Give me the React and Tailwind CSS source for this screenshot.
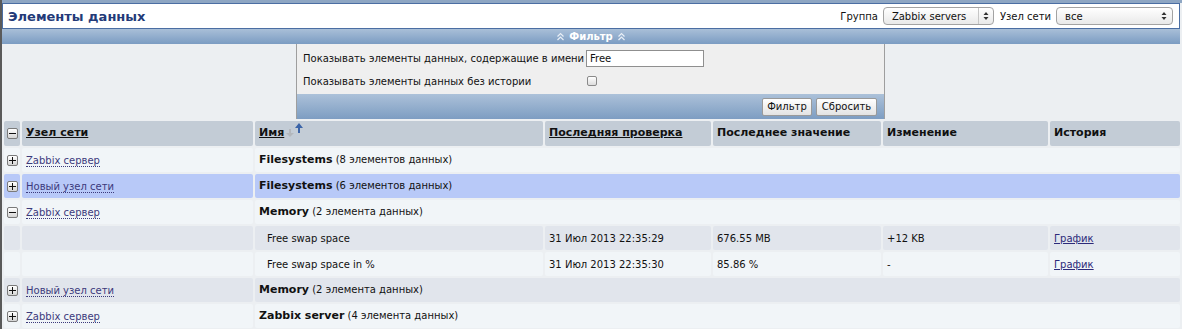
import React from 'react'

const font = { fontFamily: '"DejaVu Sans", Verdana, sans-serif' }

const Toggle = ({ open }) => (
  <span className="inline-flex w-[11px] h-[11px] items-center justify-center border border-[#7a7a7a] rounded-[2px] bg-gradient-to-b from-white to-[#d4d4d4] align-middle">
    <svg width="7" height="7" viewBox="0 0 7 7">
      <rect x="0" y="3" width="7" height="1" fill="#111" />
      {!open && <rect x="3" y="0" width="1" height="7" fill="#111" />}
    </svg>
  </span>
)

const SortIcon = () => (
  <svg width="18" height="16" viewBox="0 0 18 16" className="inline-block align-top ml-[2px] -mt-[3px]">
    <path d="M3 7 h2 v4 h3 l-4 4 l-4 -4 h3 z" fill="#b3b7bc" />
    <path d="M12 11 h2 v-5 h3 l-4 -5 l-4 5 h3 z" fill="#3b64a8" />
  </svg>
)

const HostLink = ({ children }) => (
  <span className="text-[#3c3a7c] border-b border-dotted border-[#3c3a7c]">{children}</span>
)

const rows = [
  { kind: 'group', open: false, host: 'Zabbix сервер', app: 'Filesystems', count: '(8 элементов данных)', bg: 'bg-[#f1f5f8]' },
  { kind: 'group', open: false, host: 'Новый узел сети', app: 'Filesystems', count: '(6 элементов данных)', bg: 'bg-[#b8c9f8]' },
  { kind: 'group', open: true, host: 'Zabbix сервер', app: 'Memory', count: '(2 элемента данных)', bg: 'bg-[#f1f5f8]' },
  { kind: 'item', name: 'Free swap space', check: '31 Июл 2013 22:35:29', value: '676.55 MB', change: '+12 KB', bg: 'bg-[#e1e5ec]' },
  { kind: 'item', name: 'Free swap space in %', check: '31 Июл 2013 22:35:30', value: '85.86 %', change: '-', bg: 'bg-[#f1f5f8]' },
  { kind: 'group', open: false, host: 'Новый узел сети', app: 'Memory', count: '(2 элемента данных)', bg: 'bg-[#e1e5ec]' },
  { kind: 'group', open: false, host: 'Zabbix сервер', app: 'Zabbix server', count: '(4 элемента данных)', bg: 'bg-[#f1f5f8]' },
]

const Chevrons = () => (
  <svg width="9" height="9" viewBox="0 0 9 9" className="inline-block">
    <path d="M1.5 4.5 L4.5 1.5 L7.5 4.5 M1.5 8 L4.5 5 L7.5 8" stroke="#e8eef6" strokeWidth="1.2" fill="none" />
  </svg>
)

const Arrows = () => (
  <svg width="6" height="10" viewBox="0 0 6 10">
    <path d="M0.5 4 L3 1 L5.5 4 Z M0.5 6 L3 9 L5.5 6 Z" fill="#333" />
  </svg>
)

export default function App() {
  return (
    <div style={font} className="w-[1182px] h-[329px] overflow-hidden bg-[#eceff2] border-l-2 border-[#5a5a5a] text-[10px] text-[#111]">
      {/* top strip */}
      <div className="h-[3px] bg-[#8ea6c3]" />

      {/* Header */}
      <div className="mr-[2px] bg-white border border-[#4b6ea3] h-[26px] flex items-center justify-between pl-[5px] pr-[6px]">
        <h1 className="text-[13px] font-bold text-[#233a78] leading-none">Элементы данных</h1>
        <div className="flex items-center gap-[5px]">
          <span>Группа</span>
          <div className="w-[111px] h-[18px] border border-[#a3a3a3] rounded-[4px] bg-gradient-to-b from-white to-[#e9e9e9] flex items-center justify-between pl-[8px] pr-[4px]">
            <span>Zabbix servers</span>
            <span className="border-l border-[#c6c6c6] pl-[4px] h-[16px] flex items-center"><Arrows /></span>
          </div>
          <span className="ml-[1px]">Узел сети</span>
          <div className="w-[117px] h-[18px] border border-[#a3a3a3] rounded-[4px] bg-gradient-to-b from-white to-[#e9e9e9] flex items-center justify-between pl-[8px] pr-[5px]">
            <span>все</span>
            <Arrows />
          </div>
        </div>
      </div>

      {/* Filter bar */}
      <div className="mr-[2px] h-[15px] bg-gradient-to-b from-[#a9bfd8] to-[#7b9cc2] flex items-center justify-center gap-[4px] text-white font-bold text-[10px]">
        <Chevrons />
        <span>Фильтр</span>
        <Chevrons />
      </div>

      {/* Filter form */}
      <div className="flex justify-center pl-[2px] pr-[4px]">
        <div className="w-[589px] ml-[-1px] bg-[#efefef] border-x border-[#9e9e9e]">
          <div className="pl-[6px] pt-[5px]">
            <div className="flex items-center h-[18px] whitespace-nowrap">
              <span className="w-[283px]">Показывать элементы данных, содержащие в имени</span>
              <div className="w-[118px] h-[17px] bg-white border border-[#8f8f8f] pl-[3px] flex items-center">Free</div>
            </div>
            <div className="flex items-center h-[22px] mt-[3px] whitespace-nowrap">
              <span className="w-[284px]">Показывать элементы данных без истории</span>
              <span className="w-[10px] h-[10px] border border-[#8a8a8a] rounded-[2px] bg-gradient-to-b from-white to-[#ddd]" />
            </div>
          </div>
          <div className="h-[25px] mt-[2px] bg-gradient-to-b from-[#acc1d9] to-[#7d9dc2] flex items-center justify-end gap-[4px] pr-[7px]">
            <button className="h-[18px] w-[50px] bg-gradient-to-b from-white to-[#e3e3e3] border border-[#9a9a9a] rounded-[2px] text-[10px]">Фильтр</button>
            <button className="h-[18px] w-[61px] bg-gradient-to-b from-white to-[#e3e3e3] border border-[#9a9a9a] rounded-[2px] text-[10px]">Сбросить</button>
          </div>
        </div>
      </div>

      {/* Table */}
      <table className="w-[1180px] border-separate border-spacing-[2px] text-left">
        <thead>
          <tr className="h-[25px] text-[11px]">
            <th className="w-[16px] bg-[#c3ccd6] rounded-[2px] text-center"><Toggle open /></th>
            <th className="w-[231px] bg-[#c3ccd6] rounded-[2px] pl-[4px] font-bold"><span className="underline">Узел сети</span></th>
            <th className="w-[288px] bg-[#c3ccd6] rounded-[2px] pl-[4px] font-bold"><span className="underline">Имя</span><SortIcon /></th>
            <th className="w-[166px] bg-[#c3ccd6] rounded-[2px] pl-[4px] font-bold"><span className="underline">Последняя проверка</span></th>
            <th className="w-[168px] bg-[#c3ccd6] rounded-[2px] pl-[4px] font-bold">Последнее значение</th>
            <th className="w-[165px] bg-[#c3ccd6] rounded-[2px] pl-[4px] font-bold">Изменение</th>
            <th className="bg-[#c3ccd6] rounded-[2px] pl-[4px] font-bold">История</th>
          </tr>
        </thead>
        <tbody>
          {rows.map((r, i) =>
            r.kind === 'group' ? (
              <tr key={i} className="h-[24px]">
                <td className={`${r.bg} rounded-[2px] text-center`}><Toggle open={r.open} /></td>
                <td className={`${r.bg} rounded-[2px] pl-[4px]`}><HostLink>{r.host}</HostLink></td>
                <td colSpan={5} className={`${r.bg} rounded-[2px] pl-[4px]`}>
                  <b className="text-[11px]">{r.app}</b> {r.count}
                </td>
              </tr>
            ) : (
              <tr key={i} className="h-[24px]">
                <td className={`${r.bg} rounded-[2px]`} />
                <td className={`${r.bg} rounded-[2px]`} />
                <td className={`${r.bg} rounded-[2px] pl-[12px]`}>{r.name}</td>
                <td className={`${r.bg} rounded-[2px] pl-[4px]`}>{r.check}</td>
                <td className={`${r.bg} rounded-[2px] pl-[4px]`}>{r.value}</td>
                <td className={`${r.bg} rounded-[2px] pl-[4px]`}>{r.change}</td>
                <td className={`${r.bg} rounded-[2px] pl-[4px]`}>
                  <span className="underline text-[#2c2a7a]">График</span>
                </td>
              </tr>
            )
          )}
        </tbody>
      </table>
    </div>
  )
}
